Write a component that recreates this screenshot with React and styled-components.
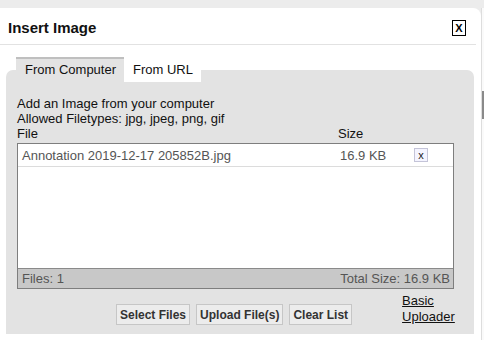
import React from "react";
import styled, { createGlobalStyle } from "styled-components";

const Global = createGlobalStyle`
  html, body {
    margin: 0;
    padding: 0;
    background: #ececec;
    font-family: "Liberation Sans", Arial, sans-serif;
  }
`;

const Page = styled.div`
  width: 484px;
  height: 340px;
  display: flex;
  overflow: hidden;
  padding-top: 8px;
  box-sizing: border-box;
`;

const Dialog = styled.div`
  width: 481px;
  background: #fff;
  border-top-right-radius: 8px;
  display: flex;
  flex-direction: column;
`;

const Backdrop = styled.div`
  flex: 1;
  background: #fafafa;
  border-left: 1px solid #ddd;
  display: flex;
  flex-direction: column;
  padding-top: 83px;
`;

const BackBar = styled.div`
  height: 28px;
  background: #8a8a8a;
`;

const Header = styled.div`
  flex-shrink: 0;
  height: 36px;
  display: flex;
  align-items: center;
  justify-content: space-between;
  padding: 0 10px 0 8px;
  border-bottom: 1px solid #e2e2e2;
  margin-right: 5px;
`;

const Title = styled.h1`
  margin: 0;
  font-size: 15px;
  font-weight: bold;
  color: #111;
  padding-top: 2px;
`;

const CloseBox = styled.button`
  width: 14px;
  height: 16px;
  padding: 0;
  border: 1px solid #000;
  background: #fff;
  font: bold 11px "Liberation Sans", Arial, sans-serif;
  color: #000;
  display: flex;
  align-items: center;
  justify-content: center;
  margin-top: 3px;
`;

const Body = styled.div`
  padding: 12px 7px 6px 6px;
  display: flex;
  flex-direction: column;
  flex: 1;
  min-height: 0;
`;

const Tabs = styled.div`
  flex-shrink: 0;
  display: flex;
  padding-left: 10px;
  height: 23px;
  position: relative;
  z-index: 1;
`;

const Tab = styled.div`
  padding: 3px 8px 0 9px;
  font-size: 13px;
  color: #111;
  background: ${(p) => (p.$active ? "#e3e3e3" : "#fff")};
  border-top: 2px solid ${(p) => (p.$active ? "#bfbfbf" : "#fff")};
  height: 20px;
  box-sizing: content-box;
  white-space: nowrap;
`;

const Panel = styled.div`
  flex: 1;
  min-height: 0;
  margin-top: -10px;
  background: #e3e3e3;
  border-radius: 7px 7px 0 0;
  padding: 26px 20px 0 11px;
  display: flex;
  flex-direction: column;
`;

const Line = styled.div`
  font-size: 13px;
  line-height: 15px;
  color: #111;
  white-space: nowrap;
`;

const HeadRow = styled.div`
  display: flex;
  font-size: 13px;
  line-height: 15px;
  color: #111;
  margin-bottom: 2px;
`;

const FileCol = styled.span`
  width: 321px;
`;

const FileBox = styled.div`
  flex-shrink: 0;
  border: 1px solid #7e7e7e;
  background: #fff;
  height: 144px;
  display: flex;
  flex-direction: column;
`;

const List = styled.div`
  flex: 1;
`;

const FileRow = styled.div`
  display: flex;
  align-items: center;
  height: 22px;
  padding-left: 4px;
  border-bottom: 1px solid #dcdcdc;
  font-size: 13px;
  color: #555;
`;

const Name = styled.span`
  width: 318px;
`;

const Size = styled.span`
  width: 74px;
`;

const RemoveBtn = styled.button`
  width: 14px;
  height: 14px;
  padding: 0;
  border: 1px solid #c4c4d8;
  background: #f4f4ff;
  font: 11px "Liberation Sans", Arial, sans-serif;
  color: #222;
  display: flex;
  align-items: center;
  justify-content: center;
`;

const Summary = styled.div`
  height: 19px;
  background: #c8c8c8;
  border-top: 1px solid #8a8a8a;
  display: flex;
  align-items: center;
  justify-content: space-between;
  padding: 0 3px 0 4px;
  font-size: 13px;
  color: #555;
`;

const Actions = styled.div`
  display: flex;
  align-items: flex-start;
  margin-top: 15px;
  padding-left: 99px;
  gap: 6px;
`;

const Button = styled.button`
  height: 21px;
  padding: 0 3px;
  border: 1px solid #c6c6c6;
  background: #ececec;
  font: bold 12px "Liberation Sans", Arial, sans-serif;
  color: #333;
  white-space: nowrap;
`;

const LinkBlock = styled.a`
  margin: -11px 0 0 44px;
  font-size: 13px;
  line-height: 16px;
  color: #111;
  text-decoration: underline;
  white-space: nowrap;
`;

export default function App() {
  return (
    <>
      <Global />
      <Page>
        <Dialog>
          <Header>
            <Title>Insert Image</Title>
            <CloseBox>X</CloseBox>
          </Header>
          <Body>
            <Tabs>
              <Tab $active>From Computer</Tab>
              <Tab>From URL</Tab>
            </Tabs>
            <Panel>
              <Line>Add an Image from your computer</Line>
              <Line>Allowed Filetypes: jpg, jpeg, png, gif</Line>
              <HeadRow>
                <FileCol>File</FileCol>
                <span>Size</span>
              </HeadRow>
              <FileBox>
                <List>
                  <FileRow>
                    <Name>Annotation 2019-12-17 205852B.jpg</Name>
                    <Size>16.9 KB</Size>
                    <RemoveBtn>x</RemoveBtn>
                  </FileRow>
                </List>
                <Summary>
                  <span>Files: 1</span>
                  <span>Total Size: 16.9 KB</span>
                </Summary>
              </FileBox>
              <Actions>
                <Button>Select Files</Button>
                <Button>Upload File(s)</Button>
                <Button>Clear List</Button>
                <LinkBlock href="#">
                  Basic
                  <br />
                  Uploader
                </LinkBlock>
              </Actions>
            </Panel>
          </Body>
        </Dialog>
        <Backdrop>
          <BackBar />
        </Backdrop>
      </Page>
    </>
  );
}
